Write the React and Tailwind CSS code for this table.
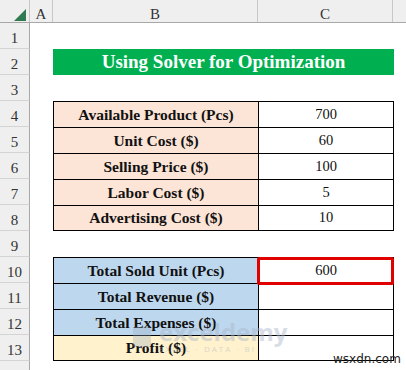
import React from "react";

const serif = { fontFamily: '"Liberation Serif", "Times New Roman", serif' };

function RowHead({ n }) {
  return (
    <div className="w-[30px] h-full shrink-0 bg-[#efefef] border-r border-r-[#a8a8a8] border-b border-b-[#d4d4d4] flex items-center justify-center pt-[6px] text-[15px] text-[#333] leading-none">
      {n}
    </div>
  );
}

function Row({ n, children }) {
  return (
    <div className="flex h-[26px]">
      <RowHead n={n} />
      <div className="w-[23px] shrink-0" />
      {children}
    </div>
  );
}

function DataRow({ n, label, value, fill, last }) {
  return (
    <Row n={n}>
      <div
        className={`w-[205px] shrink-0 border-l border-t border-black flex items-center justify-center font-bold text-[15.5px] text-[#111] ${fill} ${last ? "border-b" : ""}`}
      >
        {label}
      </div>
      <div
        className={`w-[136px] shrink-0 border-l border-r border-t border-black bg-white flex items-center justify-center text-[14.5px] text-[#111] ${last ? "border-b" : ""}`}
      >
        {value}
      </div>
    </Row>
  );
}

export default function App() {
  return (
    <div className="relative w-[406px] h-[370px] bg-white overflow-hidden" style={serif}>
      {/* column header */}
      <div className="flex h-[23px] bg-[#efefef] border-b border-[#a8a8a8] text-[15px] text-[#333] leading-none">
        <div className="w-[30px] shrink-0 border-r border-[#c8c8c8] relative">
          <svg className="absolute left-[14px] top-[9px]" width="12" height="12" viewBox="0 0 12 12">
            <polygon points="12,0 12,12 0,12" fill="#2f7a4f" />
          </svg>
        </div>
        <div className="w-[23px] shrink-0 border-r border-[#c8c8c8] flex items-center justify-center pt-[6px]">A</div>
        <div className="w-[205px] shrink-0 border-r border-[#c8c8c8] flex items-center justify-center pt-[6px]">B</div>
        <div className="w-[135px] shrink-0 border-r border-[#c8c8c8] flex items-center justify-center pt-[6px]">C</div>
        <div className="flex-1" />
      </div>

      <Row n={1} />
      <Row n={2}>
        <div className="w-[341px] shrink-0 bg-[#00b050] flex items-center justify-center text-white font-bold text-[19px]">
          Using Solver for Optimization
        </div>
      </Row>
      <Row n={3} />
      <DataRow n={4} label="Available Product (Pcs)" value="700" fill="bg-[#fce4d6]" />
      <DataRow n={5} label="Unit Cost ($)" value="60" fill="bg-[#fce4d6]" />
      <DataRow n={6} label="Selling Price ($)" value="100" fill="bg-[#fce4d6]" />
      <DataRow n={7} label="Labor Cost ($)" value="5" fill="bg-[#fce4d6]" />
      <DataRow n={8} label="Advertising Cost ($)" value="10" fill="bg-[#fce4d6]" last />
      <Row n={9} />
      <DataRow n={10} label="Total Sold Unit (Pcs)" value="600" fill="bg-[#bdd7ee]" />
      <DataRow n={11} label="Total Revenue ($)" value="" fill="bg-[#bdd7ee]" />
      <DataRow n={12} label="Total Expenses ($)" value="" fill="bg-[#bdd7ee]" />
      <DataRow n={13} label="Profit ($)" value="" fill="bg-[#fff2cc]" last />
      <Row n="" />

      {/* selected cell highlight */}
      <div className="absolute left-[257px] top-[257px] w-[137px] h-[28px] border-[3px] border-[#e00000] rounded-[2px]" />

      {/* watermark */}
      <div className="absolute left-[133px] top-[320px] flex items-center gap-[8px] opacity-45 pointer-events-none">
        <div className="w-[18px] h-[20px] rounded-[3px] bg-[#9aa8c0] opacity-70" />
        <div className="flex flex-col leading-none">
          <span className="text-[24px] font-bold text-[#aab6ca]" style={{ fontFamily: '"Open Sans", sans-serif' }}>exceldemy</span>
          <span className="text-[8px] tracking-[2px] text-[#aab6ca] mt-[1px]" style={{ fontFamily: '"Open Sans", sans-serif' }}>EXCEL · DATA · BI</span>
        </div>
      </div>
      <div className="absolute left-[333px] top-[350px] text-[12px] text-[#222]" style={{ fontFamily: '"DejaVu Sans", sans-serif' }}>
        wsxdn.com
      </div>
    </div>
  );
}
